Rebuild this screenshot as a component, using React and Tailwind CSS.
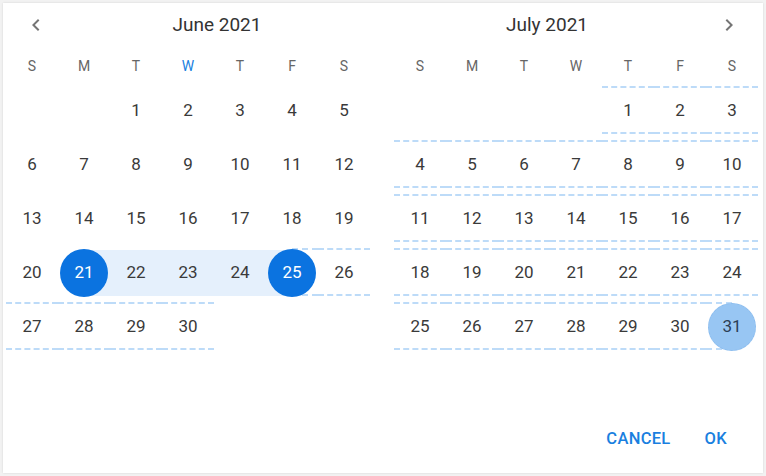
import React from "react";

const WEEK = ["S", "M", "T", "W", "T", "F", "S"];

// June 2021 starts on Tuesday, July 2021 on Thursday
function buildWeeks(offset, days) {
  const cells = [];
  for (let i = 0; i < offset; i++) cells.push(null);
  for (let d = 1; d <= days; d++) cells.push(d);
  while (cells.length % 7) cells.push(null);
  const weeks = [];
  for (let i = 0; i < cells.length; i += 7) weeks.push(cells.slice(i, i + 7));
  return weeks;
}

const months = [
  { title: "June 2021", weeks: buildWeeks(2, 30), key: "jun" },
  { title: "July 2021", weeks: buildWeeks(4, 31), key: "jul" },
];

// selected range June 21 – 25, preview (hover) range June 25 – July 31
function dayState(month, d) {
  const s = { selected: false, inRange: false, rangeStart: false, rangeEnd: false, preview: false, previewStart: false, previewEnd: false };
  if (month === "jun") {
    if (d === 21) s.selected = s.rangeStart = true;
    if (d === 25) s.selected = s.rangeEnd = true;
    if (d > 21 && d < 25) s.inRange = true;
    if (d === 25) s.previewStart = true;
    if (d > 25) s.preview = true;
  } else {
    if (d < 31) s.preview = true;
    if (d === 31) s.previewEnd = true;
  }
  return s;
}

function ArrowIcon({ dir }) {
  const d =
    dir === "left"
      ? "M15.41 16.59 10.83 12l4.58-4.59L14 6l-6 6 6 6 1.41-1.41z"
      : "M8.59 16.59 13.17 12 8.59 7.41 10 6l6 6-6 6-1.41-1.41z";
  return (
    <svg viewBox="0 0 24 24" className="w-[24px] h-[24px]" fill="#757575">
      <path d={d} />
    </svg>
  );
}

function Day({ month, day }) {
  if (!day) return <div className="w-[52px] h-[48px]" />;
  const st = dayState(month, day);
  return (
    <div
      className={`relative w-[52px] h-[48px] flex items-center justify-center ${
        st.preview ? "border-y-2 border-dashed border-[#bddbf8]" : ""
      }`}
    >
      {st.inRange && <div className="absolute inset-x-0 top-[2px] bottom-0 bg-[#e5f0fc]" />}
      {st.rangeStart && <div className="absolute left-1/2 right-0 top-[2px] bottom-0 bg-[#e5f0fc]" />}
      {st.rangeEnd && <div className="absolute left-0 right-1/2 top-[2px] bottom-0 bg-[#e5f0fc]" />}
      {st.previewStart && (
        <div className="absolute left-1/2 right-0 inset-y-0 border-y-2 border-dashed border-[#bddbf8]" />
      )}
      {st.previewEnd && (
        <div className="absolute left-0 right-1/2 inset-y-0 border-y-2 border-dashed border-[#bddbf8]" />
      )}
      {st.selected && (
        <div className="absolute top-[1px] left-[2px] w-[48px] h-[48px] rounded-full bg-[#0b73e0]" />
      )}
      {st.previewEnd && (
        <div className="absolute top-[1px] left-[2px] w-[48px] h-[48px] rounded-full bg-[#98c6f3] border border-dashed border-[#8bbcee]" />
      )}
      <span
        className={`relative text-[17px] leading-none ${
          st.selected ? "text-white" : st.previewEnd ? "text-[#2c3e55]" : "text-[#3a3a3a]"
        }`}
      >
        {day}
      </span>
    </div>
  );
}

function Month({ month, side }) {
  return (
    <div className="w-[364px] flex flex-col">
      <div className="h-[40px] flex items-center pt-[4px]">
        {side === "left" && (
          <div className="w-[58px] flex justify-center pl-[1px]">
            <ArrowIcon dir="left" />
          </div>
        )}
        <span className="flex-1 text-center text-[19px] text-[#333333]">{month.title}</span>
        {side === "right" && (
          <div className="w-[58px] flex justify-center">
            <ArrowIcon dir="right" />
          </div>
        )}
      </div>
      <div className="mt-[3px] h-[40px] flex">
        {WEEK.map((w, i) => (
          <div
            key={i}
            className={`w-[52px] flex items-center justify-center text-[14px] ${
              side === "left" && i === 3 ? "text-[#1a7fe0]" : "text-[#666666]"
            }`}
          >
            {w}
          </div>
        ))}
      </div>
      <div className="flex flex-col gap-[6px]">
        {month.weeks.map((wk, i) => (
          <div key={i} className="flex">
            {wk.map((d, j) => (
              <Day key={j} month={month.key} day={d} />
            ))}
          </div>
        ))}
      </div>
    </div>
  );
}

export default function App() {
  return (
    <div
      className="w-[766px] h-[476px] bg-[#f2f2f2] p-[3px]"
      style={{ fontFamily: "Roboto, 'Liberation Sans', sans-serif" }}
    >
      <div className="w-full h-full bg-white shadow-[0_0_2px_rgba(0,0,0,0.12)] flex flex-col">
        <div className="flex gap-[24px] px-[3px]">
          <Month month={months[0]} side="left" />
          <Month month={months[1]} side="right" />
        </div>
        <div className="mt-auto mb-[11px] mr-[26px] flex justify-end items-center gap-[14px]">
          <button className="h-[46px] px-[10px] text-[16.5px] font-medium tracking-[0.3px] text-[#1a7fe0]">
            CANCEL
          </button>
          <button className="h-[46px] px-[10px] text-[16.5px] font-medium tracking-[0.3px] text-[#1a7fe0]">
            OK
          </button>
        </div>
      </div>
    </div>
  );
}
